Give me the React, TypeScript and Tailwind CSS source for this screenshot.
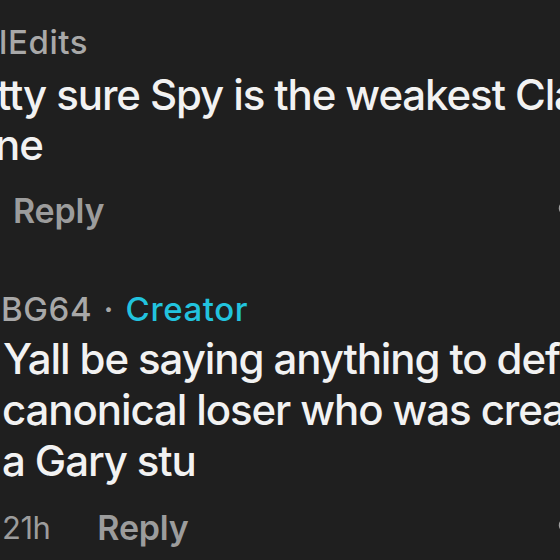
import React from 'react';
import { Heart } from 'lucide-react';

const font = { fontFamily: 'Inter, "Noto Sans", sans-serif' };

const App: React.FC = () => {
  return (
    <div
      className="w-[560px] h-[560px] overflow-hidden bg-[#1f1f1f] text-[#f2f2f2] whitespace-nowrap"
      style={font}
    >
      {/* first comment */}
      <div className="pt-[24px]">
        <div className="text-[33px] leading-[36px] font-medium tracking-[0.6px] text-[#a8a8a8] ml-[-1px]">
          lEdits
        </div>
        <div className="mt-[10px] text-[42px] leading-[50px] font-medium tracking-[-1.1px]">
          <div className="ml-[-3px]">tty sure Spy is the weakest Class in the</div>
          <div className="ml-[-5px]">ne</div>
        </div>
        <div className="mt-[21px] flex items-center text-[34px] leading-[40px] font-semibold tracking-[-0.2px] text-[#9c9c9c]">
          <span className="ml-[13px]">Reply</span>
          <Heart className="ml-auto mr-[-22px] h-6 w-6 text-[#9c9c9c]" strokeWidth={2.5} />
        </div>
      </div>

      {/* second comment */}
      <div className="mt-[60px]">
        <div className="text-[33px] leading-[36px] font-medium tracking-[0.6px] text-[#a8a8a8] ml-[1px]">
          BG64 <span className="mx-[2px]">·</span>{' '}
          <span className="text-[#22c3de]">Creator</span>
        </div>
        <div className="mt-[6px] text-[42px] leading-[51px] font-medium tracking-[-1.1px]">
          <div className="ml-[3px]">Yall be saying anything to defend</div>
          <div className="ml-[2px]">canonical loser who was created as</div>
          <div className="ml-[2px]">a Gary stu</div>
        </div>
        <div className="mt-[22px] flex items-center leading-[40px] text-[#9c9c9c]">
          <span className="ml-[2px] text-[31px] tracking-[-0.5px]">21h</span>
          <span className="ml-[47px] text-[34px] font-semibold tracking-[-0.2px]">Reply</span>
          <Heart className="ml-auto mr-[-22px] h-6 w-6 text-[#9c9c9c]" strokeWidth={2.5} />
        </div>
      </div>
    </div>
  );
};

export default App;
